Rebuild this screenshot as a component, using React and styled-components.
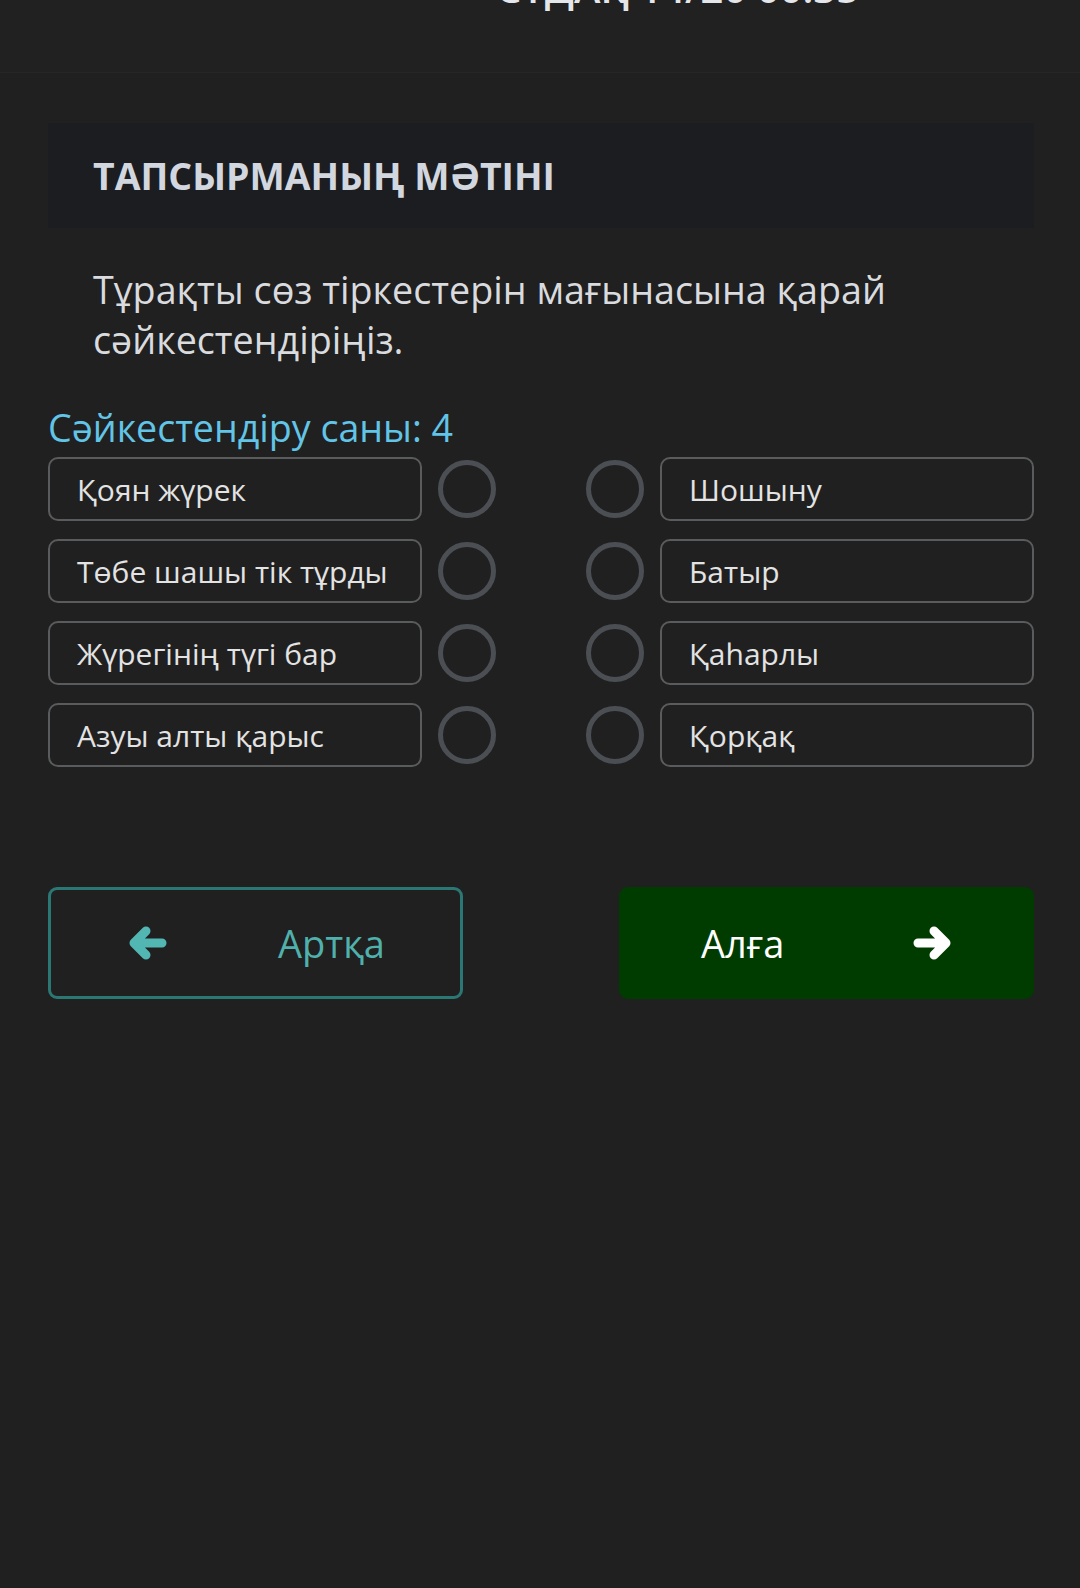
import React from "react";
import styled, { createGlobalStyle } from "styled-components";

const GlobalStyle = createGlobalStyle`
  html, body {
    margin: 0;
    padding: 0;
    background: #202020;
  }
  body {
    font-family: "Open Sans", "Noto Sans", sans-serif;
    color: #e0e0e0;
  }
  * { box-sizing: border-box; }
`;

const Page = styled.div`
  width: 1080px;
  min-height: 1588px;
  background: #202020;
`;

const Header = styled.header`
  height: 73px;
  background: #212121;
  border-bottom: 1px solid #262626;
  overflow: hidden;
  padding-left: 496px;
`;

const HeaderTitle = styled.div`
  margin-top: -36px;
  font-size: 40px;
  line-height: 48px;
  font-weight: 600;
  color: #e4e6ea;
  white-space: nowrap;
`;

const Main = styled.main`
  padding: 50px 46px 0 48px;
`;

const TitleCard = styled.section`
  height: 105px;
  background: #1c1d21;
  padding-left: 45px;
  display: flex;
  align-items: center;
`;

const TitleText = styled.h2`
  margin: 0;
  font-size: 37.4px;
  font-weight: 700;
  color: #d2d6df;
`;

const Question = styled.p`
  margin: 37px 0 0;
  padding: 0 45px;
  font-size: 37.7px;
  line-height: 50px;
  color: #d9dbdf;
`;

const CountLabel = styled.div`
  margin-top: 42px;
  font-size: 37.6px;
  line-height: 42px;
  color: #62c4e6;
`;

const MatchGrid = styled.div`
  margin-top: 8px;
  display: grid;
  grid-template-columns: 374px 58px 1fr 58px 374px;
  column-gap: 16px;
  row-gap: 18px;
`;

const OptionBox = styled.div`
  grid-column: ${(p) => (p.$side === "left" ? 1 : 5)};
  height: 64px;
  border: 2px solid #5a5b5d;
  border-radius: 10px;
  padding-left: 27px;
  display: flex;
  align-items: center;
  font-size: 30px;
  color: #e3e3e3;
  white-space: nowrap;
`;

const Dot = styled.div`
  grid-column: ${(p) => (p.$side === "left" ? 2 : 4)};
  align-self: center;
  width: 58px;
  height: 58px;
  border: 5px solid #4b4f54;
  border-radius: 50%;
`;

const NavRow = styled.div`
  margin-top: 120px;
  display: flex;
  justify-content: space-between;
`;

const NavButton = styled.button`
  width: 415px;
  height: 112px;
  border-radius: 9px;
  display: flex;
  align-items: center;
  font-family: inherit;
  font-size: 38px;
  cursor: pointer;
  padding: 0;
  ${(p) =>
    p.$primary
      ? `
    background: #003b00;
    border: 0;
    color: #ffffff;
    padding-left: 82px;
    gap: 128px;
  `
      : `
    background: transparent;
    border: 3px solid #2a7774;
    color: #50b0ac;
    padding-left: 77px;
    gap: 110px;
  `}
`;

const NavIcon = styled.svg`
  width: 40px;
  height: 34px;
  display: block;
  color: ${(p) => (p.$primary ? "#ffffff" : "#52b6b2")};
`;

const NavLabel = styled.span`
  line-height: 1;
`;

function Arrow({ dir, primary }) {
  const flip = dir === "right" ? "translate(40 0) scale(-1 1)" : undefined;
  return (
    <NavIcon viewBox="0 0 40 34" $primary={primary}>
      <g transform={flip}>
        <path
          d="M18 5 L6 17 L18 29 M7 17 L34 17"
          fill="none"
          stroke="currentColor"
          strokeWidth="9"
          strokeLinecap="round"
          strokeLinejoin="round"
        />
      </g>
    </NavIcon>
  );
}

const leftItems = [
  "Қоян жүрек",
  "Төбе шашы тік тұрды",
  "Жүрегінің түгі бар",
  "Азуы алты қарыс",
];
const rightItems = ["Шошыну", "Батыр", "Қаһарлы", "Қорқақ"];

export default function App() {
  return (
    <Page>
      <GlobalStyle />
      <Header>
        <HeaderTitle>СҰДАҚ 14/20 00:35</HeaderTitle>
      </Header>
      <Main>
        <TitleCard>
          <TitleText>ТАПСЫРМАНЫҢ МӘТІНІ</TitleText>
        </TitleCard>
        <Question>
          Тұрақты сөз тіркестерін мағынасына қарай сәйкестендіріңіз.
        </Question>
        <CountLabel>Сәйкестендіру саны: 4</CountLabel>
        <MatchGrid>
          {leftItems.map((l, i) => (
            <React.Fragment key={i}>
              <OptionBox $side="left">{l}</OptionBox>
              <Dot $side="left" />
              <Dot $side="right" />
              <OptionBox $side="right">{rightItems[i]}</OptionBox>
            </React.Fragment>
          ))}
        </MatchGrid>
        <NavRow>
          <NavButton>
            <Arrow dir="left" />
            <NavLabel>Артқа</NavLabel>
          </NavButton>
          <NavButton $primary>
            <NavLabel>Алға</NavLabel>
            <Arrow dir="right" primary />
          </NavButton>
        </NavRow>
      </Main>
    </Page>
  );
}
